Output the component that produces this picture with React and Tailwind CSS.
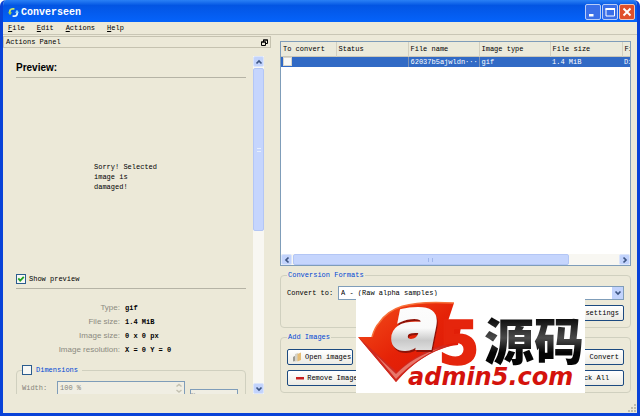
import React, { useState } from 'react';

const menus = ['File', 'Edit', 'Actions', 'Help'];

const columns = [
  { name: 'To convert', width: 'w-[55px]' },
  { name: 'Status', width: 'w-[72px]' },
  { name: 'File name', width: 'w-[71px]' },
  { name: 'Image type', width: 'w-[71px]' },
  { name: 'File size', width: 'w-[72px]' },
  { name: 'File path', width: 'w-[71px]' },
];

const info = [
  ['Type:', 'gif'],
  ['File size:', '1.4 MiB'],
  ['Image size:', '0 x 0 px'],
  ['Image resolution:', 'X = 0 Y = 0'],
];

const Chevron = ({ d }) => (
  <svg viewBox="0 0 8 8" className="w-2 h-2" fill="none" stroke="#3d5583" strokeWidth="1.7">
    <path d={d} />
  </svg>
);

const ScrollButton = ({ label, d }) => (
  <button
    aria-label={label}
    className="flex items-center justify-center w-[11px] h-[11px] shrink-0 rounded-xs border border-[#dbe5fb] bg-[#c2d3fc]"
  >
    <Chevron d={d} />
  </button>
);

const CheckBox = ({ id, checked, onChange }) => (
  <span className="relative inline-flex w-[10px] h-[10px] shrink-0">
    <input
      id={id}
      type="checkbox"
      checked={checked}
      onChange={onChange}
      className="appearance-none w-full h-full border border-[#2b5c8e] bg-[#f8f8f5]"
    />
    {checked && (
      <svg viewBox="0 0 10 10" className="absolute inset-0 pointer-events-none" fill="none" stroke="#21a121" strokeWidth="1.8">
        <path d="M2.3 4.4 L4.2 6.6 L7.8 2.8" />
      </svg>
    )}
  </span>
);

const PushButton = ({ children, className = '' }) => (
  <button
    className={`flex items-center gap-[3px] h-4 px-1 whitespace-nowrap rounded-xs border border-[#1c4a80] bg-linear-to-b from-white to-[#ecebe4] ${className}`}
  >
    {children}
  </button>
);

const TitleBar = () => (
  <header className="flex items-center h-[22px] shrink-0 pt-0.5 pl-[5px] pr-0.5 bg-linear-to-b from-[#2a80f5] via-[#0355e3] via-25% to-[#0563fb]">
    <svg viewBox="0 0 12 12" className="w-[11px] h-[11px] shrink-0" fill="none" strokeWidth="2">
      <path d="M7 2 H5 C2.6 2 1.6 4 2 6.4" stroke="#c7e66a" />
      <path d="M0 5.8 H4.4 L2.2 9 Z" fill="#9ed24b" />
      <path d="M5 10 H7 C9.4 10 10.4 8 10 5.6" stroke="#dff3fb" />
      <path d="M7.6 6.2 H12 L9.8 3 Z" fill="#8fd8f0" />
    </svg>
    <h1 className="ml-0.5 pt-0.5 font-['Liberation_Mono',monospace] text-[10px] leading-3 font-bold text-white">Converseen</h1>
    <div className="ml-auto flex gap-px">
      <button aria-label="Minimize" className="w-4 h-4 rounded-xs border border-[#b9cdf8] bg-[#3a6fe8]">
        <svg viewBox="0 0 14 14"><path d="M3 9 H7.5 V11.5 H3 Z" fill="#fff" /></svg>
      </button>
      <button aria-label="Maximize" className="w-4 h-4 rounded-xs border border-[#b9cdf8] bg-[#3a6fe8]">
        <svg viewBox="0 0 14 14" fill="none" stroke="#fff">
          <path d="M3 3.5 H11.5 V11 H3 Z" />
          <path d="M2.5 4 H12" strokeWidth="2" />
        </svg>
      </button>
      <button aria-label="Close" className="w-4 h-4 rounded-xs border border-[#f0c4b8] bg-[#e0502b]">
        <svg viewBox="0 0 14 14" stroke="#fff" strokeWidth="1.9">
          <path d="M3.5 3.5 L10.5 10.5 M10.5 3.5 L3.5 10.5" />
        </svg>
      </button>
    </div>
  </header>
);

const ActionsPanel = () => {
  const [preview, setPreview] = useState(true);
  const [dimensions, setDimensions] = useState(false);

  return (
    <aside className="flex flex-col w-[268px] shrink-0 pb-[19px]">
      <div className="flex items-center justify-between h-3 mt-px shrink-0 pl-[2px] pr-[2px] border border-[#c5c2b0]">
        <h2>Actions Panel</h2>
        <button aria-label="Float panel">
          <svg viewBox="0 0 7 7" className="w-[7px] h-[7px]" fill="#ece9d8" stroke="#000">
            <path d="M2.5 1 H6.5 V4.5 H2.5 Z M2 1 H7" />
            <path d="M0.5 3 H4.5 V6.5 H0.5 Z M0 3 H5" />
          </svg>
        </button>
      </div>

      <div className="flex flex-1 min-h-0 mt-2 pr-[7px]">
        <div className="flex-1 overflow-hidden pl-[13px] pr-[7px]">
          <h3 className="pt-1.5 pb-[3px] font-['Liberation_Sans',sans-serif] text-[10px] leading-3 font-bold border-b border-[#b5b3a5]">
            Preview:
          </h3>
          <div className="flex items-center justify-center h-[196px]">
            <p className="w-[74px] pt-0.5 leading-[10px]">Sorry! Selected<br />image is<br />damaged!</p>
          </div>
          <div className="flex items-center gap-[3px] pb-1 border-b border-[#b5b3a5]">
            <CheckBox id="show-preview" checked={preview} onChange={() => setPreview(!preview)} />
            <label htmlFor="show-preview">Show preview</label>
          </div>

          <dl className="grid grid-cols-[104px_1fr] gap-x-[5px] pt-3 leading-[14px]">
            {info.map(([name, value]) => (
              <React.Fragment key={name}>
                <dt className="text-right font-['Liberation_Sans',sans-serif] text-[8px] leading-[14px] text-[#8b8a80]">{name}</dt>
                <dd className="font-bold">{value}</dd>
              </React.Fragment>
            ))}
          </dl>

          <fieldset className="mt-2 px-[5px] pb-2 rounded-sm border border-[#d0d0bf]">
            <legend className="flex items-center gap-1 pr-1 text-[#0046d5]">
              <CheckBox id="dimensions" checked={dimensions} onChange={() => setDimensions(!dimensions)} />
              <label htmlFor="dimensions">Dimensions</label>
            </legend>
            <div className="flex gap-[5px] pt-1.5 text-[#85847a]">
              <label htmlFor="width" className="w-[30px] leading-[14px]">Width:</label>
              <div className="flex h-[14px] w-32 border border-[#7f9db9] bg-[#f0eee3]">
                <input id="width" disabled={!dimensions} defaultValue="100 %" className="flex-1 min-w-0 pl-0.5" />
                <svg viewBox="0 0 10 12" className="w-[10px] h-3" fill="none" stroke="#c3c1b1" strokeWidth="1.5">
                  <path d="M2.5 4.5 L5 2.5 L7.5 4.5 M2.5 8 L5 10 L7.5 8" />
                </svg>
              </div>
              <select aria-label="Unit" disabled={!dimensions} className="appearance-none w-12 h-[14px] mt-2 border border-[#7f9db9] bg-[#f0eee3]">
                <option>%</option>
                <option>px</option>
              </select>
            </div>
          </fieldset>
        </div>

        <div className="flex flex-col w-[11px] shrink-0 bg-[#f8f7f2]">
          <ScrollButton label="Scroll up" d="M1.5 5.5 L4 3 L6.5 5.5" />
          <div className="flex flex-col items-center justify-center h-[163px] my-px rounded-xs border border-[#b3c6f5] bg-[#c5d5fd]">
            <span className="w-1 h-1 border-y border-[#e6eefc]" />
          </div>
          <div className="flex-1" />
          <ScrollButton label="Scroll down" d="M1.5 2.5 L4 5 L6.5 2.5" />
        </div>
      </div>
    </aside>
  );
};

const FileList = () => {
  const [picked, setPicked] = useState(false);

  return (
    <section className="flex flex-col flex-1 min-h-0 border border-[#7f9db9] bg-white">
      <div className="flex-1 overflow-hidden">
        <table className="table-fixed w-[412px] text-left">
          <thead>
            <tr className="h-[14px] bg-[#ebeadb] border-b border-[#cbc7b8]">
              {columns.map((column) => (
                <th key={column.name} className={`${column.width} pl-0.5 font-normal whitespace-nowrap border-r border-[#d3d0c0]`}>
                  {column.name}
                </th>
              ))}
            </tr>
          </thead>
          <tbody>
            <tr className="h-[10px] leading-[10px] bg-[#316ac5] text-white whitespace-nowrap">
              <td className="pl-0.5">
                <input
                  type="checkbox"
                  aria-label="Convert this file"
                  checked={picked}
                  onChange={() => setPicked(!picked)}
                  className="block appearance-none w-[9px] h-[9px] border border-[#d8d6ca] bg-[#f8f8f5] checked:bg-[#21a121]"
                />
              </td>
              <td />
              <td className="pl-0.5 border-x border-[#7d92b5]">62037b5ajwldn···</td>
              <td className="pl-0.5">gif</td>
              <td className="pl-0.5">1.4 MiB</td>
              <td className="pl-0.5">Di</td>
            </tr>
          </tbody>
        </table>
      </div>
      <div className="flex h-[11px] shrink-0 bg-[#f8f7f2]">
        <ScrollButton label="Scroll left" d="M5.5 1.5 L3 4 L5.5 6.5" />
        <div className="flex items-center justify-center w-[79%] mx-px rounded-xs border border-[#b3c6f5] bg-[#c5d5fd]">
          <span className="w-[5px] h-1 border-x border-[#9eb5ea]" />
        </div>
        <div className="flex-1" />
        <ScrollButton label="Scroll right" d="M2.5 1.5 L5 4 L2.5 6.5" />
      </div>
    </section>
  );
};

const Banner = () => (
  <div className="absolute right-[52px] bottom-5 w-[229px] h-[97px] bg-white">
    <svg viewBox="0 0 229 97" className="w-full h-full">
      <defs>
        <linearGradient id="red" x1="0" y1="0" x2="1" y2="1">
          <stop offset="0" stopColor="#f4511c" />
          <stop offset="0.5" stopColor="#e52207" />
          <stop offset="1" stopColor="#d8160a" />
        </linearGradient>
        <linearGradient id="silver" x1="0" y1="0" x2="0" y2="1">
          <stop offset="0" stopColor="#ffffff" />
          <stop offset="0.55" stopColor="#fafafa" />
          <stop offset="0.7" stopColor="#c9c9c9" />
          <stop offset="1" stopColor="#ffffff" />
        </linearGradient>
        <linearGradient id="ink" x1="0" y1="0" x2="0" y2="1">
          <stop offset="0.2" stopColor="#050505" />
          <stop offset="0.5" stopColor="#4b4b4b" />
          <stop offset="0.7" stopColor="#050505" />
        </linearGradient>
      </defs>
      <path d="M2 41 L16 41 C18 34 20 30 23 27 C33 12 50 4 98 7 L92 25 L106 25 L102 49 C80 51 58 65 40 86 Z" fill="url(#red)" />
      <path d="M2 41 L41 76 C54 63 72 53 88 49 L94 50 C74 56 57 66 40 86 Z" fill="#cf2a20" />
      <path d="M20 59 L40 78 C52 66 66 58 84 52 C68 59 53 69 40 83 Z" fill="#e8776b" />
      <path d="M16 41 C18 34 20 30 23 27 C33 12 50 4 98 7" fill="none" stroke="#f7713a" strokeWidth="1.5" />
      <text x="82" y="68" fontFamily="DejaVu Sans, sans-serif" fontSize="60" fontWeight="700" fill="#e5250c" stroke="#e5250c" strokeWidth="1.5">5</text>
      <text x="37" y="54" fontFamily="DejaVu Sans, sans-serif" fontSize="70" fontWeight="700" fontStyle="italic" fill="#8d1309" stroke="#8d1309" strokeWidth="4">a</text>
      <text x="36" y="52" fontFamily="DejaVu Sans, sans-serif" fontSize="70" fontWeight="700" fontStyle="italic" fill="url(#silver)" stroke="url(#silver)" strokeWidth="4">a</text>
      <text x="128" y="64" fontFamily="Noto Sans CJK SC, sans-serif" fontSize="50" fontWeight="900" fill="url(#ink)">源码</text>
      <text x="52" y="89" fontFamily="DejaVu Sans, sans-serif" fontSize="24" fontWeight="700" fontStyle="italic" fill="#d4120c">admin5.com</text>
    </svg>
  </div>
);

const App = () => (
  <div className="relative flex flex-col h-screen overflow-hidden rounded-t-md border-x-[3px] border-b-[3px] border-[#0842d8] bg-[#ece9d8] font-['Liberation_Mono',monospace] text-[7px] leading-[10px] text-black">
    <TitleBar />
    <nav className="flex items-center gap-3 h-[13px] shrink-0 px-[5px] border-b border-[#c9c6b5]">
      {menus.map((menu) => (
        <button key={menu}>
          <span className="underline">{menu[0]}</span>{menu.slice(1)}
        </button>
      ))}
    </nav>

    <div className="flex flex-1 min-h-0">
      <ActionsPanel />
      <main className="flex flex-col flex-1 min-w-0 pl-[9px] pr-[6px] pt-1.5 pb-5">
        <FileList />

        <fieldset className="mt-1 px-1.5 pb-1.5 rounded-sm border border-[#d0d0bf]">
          <legend className="px-px text-[#0046d5]">Conversion Formats</legend>
          <div className="flex items-center gap-1 pt-1.5">
            <label htmlFor="format" className="w-[47px] whitespace-nowrap">Convert to:</label>
            <div className="flex flex-1 h-[14px] border border-[#7f9db9] bg-white">
              <select id="format" className="appearance-none flex-1 pl-0.5">
                <option>A - (Raw alpha samples)</option>
              </select>
              <span className="flex items-center justify-center w-[11px] bg-[#c2d3fc]">
                <Chevron d="M1.5 2.5 L4 5 L6.5 2.5" />
              </span>
            </div>
          </div>
          <div className="flex justify-end pt-[5px]">
            <PushButton className="w-[66px] justify-end">Image settings</PushButton>
          </div>
        </fieldset>

        <fieldset className="mt-1 px-1.5 pb-1.5 rounded-sm border border-[#d0d0bf]">
          <legend className="px-px text-[#0046d5]">Add Images</legend>
          <div className="flex justify-between pt-[7px]">
            <PushButton className="w-[66px]">
              <svg viewBox="0 0 10 10" className="w-[10px] h-[10px] shrink-0">
                <path d="M1 5 L3.5 3.5 V9 L1 9.5 Z" fill="#9a9a94" />
                <path d="M3 2 L6 1 V9 L3 9.5 Z" fill="#d5d2c8" />
                <path d="M5.5 2 L9 0.5 V8 L5.5 9.5 Z" fill="#e6bd76" />
              </svg>
              Open images
            </PushButton>
            <PushButton className="w-[66px] justify-end">Convert</PushButton>
          </div>
          <div className="flex justify-between pt-[5px]">
            <PushButton className="w-[84px] justify-center">
              <svg viewBox="0 0 8 8" className="w-2 h-2 shrink-0">
                <path d="M0 3 H8 V5.5 H0 Z" fill="#c81e1e" />
              </svg>
              Remove Images
            </PushButton>
            <PushButton className="w-[76px] justify-center">Uncheck All</PushButton>
          </div>
        </fieldset>
      </main>
    </div>

    <svg viewBox="0 0 9 9" className="absolute right-0 bottom-0 w-[9px] h-[9px]" fill="#bfbcab">
      <path d="M6 0 h2 v2 h-2z M3 3 h2 v2 h-2z M6 3 h2 v2 h-2z M0 6 h2 v2 h-2z M3 6 h2 v2 h-2z M6 6 h2 v2 h-2z" />
    </svg>
    <Banner />
  </div>
);

export default App;
